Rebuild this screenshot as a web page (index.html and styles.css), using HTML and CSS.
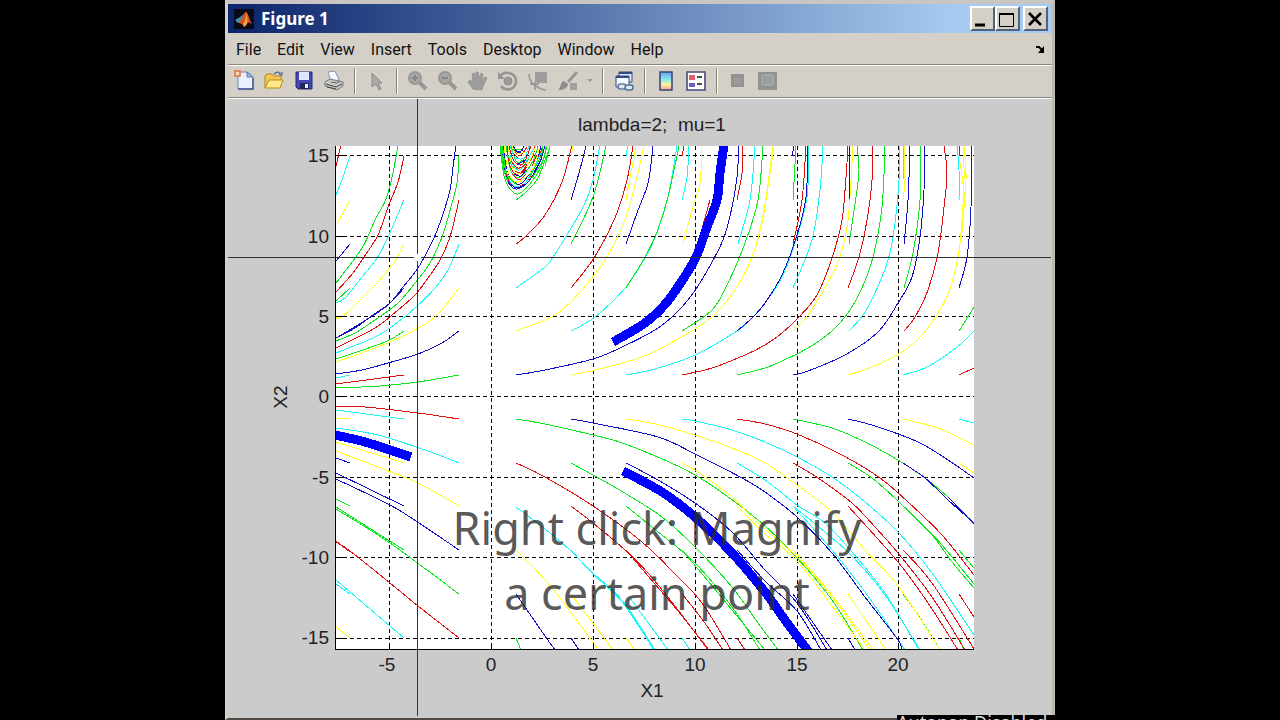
FILE: index.html
```html
<!DOCTYPE html>
<html lang="en">
<head>
    <meta charset="UTF-8">
    <meta name="viewport" content="width=device-width, initial-scale=1.0">
    <title>Figure 1</title>
    <link rel="stylesheet" href="styles.css">
</head>
<body>
    <main class="window">
        <header class="title-bar">
            <svg class="logo" viewBox="0 0 20 20" width="20" height="20">
                <rect width="20" height="20" fill="#080a18"/>
                <path d="M1 11 6 8l4-3-3 8-3 1z" fill="#3e8fb0"/>
                <path d="M4 14c4-1 5-11 8-11 2 0 3 7 6 12-3-2-4-2-5 0l-3 3c-1-3-3-4-6-4z" fill="#d8541c"/>
                <path d="M12 3c1 3-1 10-3 12l1 3 3-3c1-4 0-9-1-12z" fill="#f9a04a"/>
            </svg>
            <h1>Figure 1</h1>
            <div class="window-buttons">
                <button type="button" aria-label="Minimize"><svg viewBox="0 0 20 20" width="20" height="20"><path d="M3 16h10" stroke="#000" stroke-width="3"/></svg></button>
                <button type="button" aria-label="Maximize"><svg viewBox="0 0 20 20" width="20" height="20"><path d="M2.500 5v12.500h14V5" fill="none" stroke="#000"/><path d="M2 5h15" stroke="#000" stroke-width="2"/></svg></button>
                <button type="button" class="close" aria-label="Close"><svg viewBox="0 0 20 20" width="20" height="20"><path d="M4 4l12 12M16 4 4 16" stroke="#000" stroke-width="2.600"/></svg></button>
            </div>
        </header>

        <nav class="menu-bar">
            <button type="button">File</button>
            <button type="button">Edit</button>
            <button type="button">View</button>
            <button type="button">Insert</button>
            <button type="button">Tools</button>
            <button type="button">Desktop</button>
            <button type="button">Window</button>
            <button type="button">Help</button>
            <button type="button" class="dock" aria-label="Dock"><svg viewBox="0 0 10 10" width="10" height="10"><path d="M1 2h3l3 3" fill="none" stroke="#000" stroke-width="1.800"/><path d="M9 1v7H3z" fill="#000"/></svg></button>
        </nav>

        <div class="toolbar">
            <button type="button" aria-label="New"><svg viewBox="0 0 22 22"><path d="M5 2h9l6 5v12H5z" fill="#e9f1ff" stroke="#7385b5"/><path d="M14 2v5h6z" fill="#a9bde4" stroke="#5c70a5"/><path d="M5 19h15V8" fill="none" stroke="#41558f" stroke-width="1.400"/><path d="M2 1h5v5H2z" fill="#ffd9ae" stroke="#e36f40" stroke-width="1.500"/></svg></button>
            <button type="button" aria-label="Open"><svg viewBox="0 0 22 22"><path d="M2 18V6l2-2h5l2 2h7v4" fill="#f2c84d" stroke="#b18322"/><path d="M2 18l4-8h14l-3 8z" fill="#ffe989" stroke="#b88a1f"/><path d="M11 4c3-3 6-2 7 1M16 4l3 1V2" fill="none" stroke="#66748c" stroke-width="1.400"/></svg></button>
            <button type="button" aria-label="Save"><svg viewBox="0 0 22 22"><path d="M3 2h16v17H5l-2-2z" fill="#4348b8" stroke="#24286f"/><path d="M6 2h10v8H6z" fill="#dce7ff"/><path d="M7 13h9v6H7z" fill="#20265d"/><path d="M12 14h3v4h-3z" fill="#eef"/></svg></button>
            <button type="button" aria-label="Print"><svg viewBox="0 0 22 22"><path d="M5 2l7-1 4 9-8 2z" fill="#f3f9ff" stroke="#8795a8"/><path d="M2 12l5-3 13 3v4l-6 4-12-4z" fill="#c9c9c4" stroke="#777"/><path d="M3 14l10 3 6-3M4 17l9 2" fill="none" stroke="#444"/><path d="M8 12l6 1 3-2" fill="none" stroke="#666"/></svg></button>
            <span class="separator"></span>
            <button type="button" aria-label="Edit plot"><svg viewBox="0 0 22 22"><path d="M7 3v14l4-3 3 6 2-1-3-6h4z" fill="#aaa" stroke="#8a8a8a"/></svg></button>
            <span class="separator"></span>
            <button type="button" aria-label="Zoom in"><svg viewBox="0 0 22 22"><path d="M12 12l7 7" stroke="#979795" stroke-width="4"/><circle cx="8" cy="8" r="6" fill="#a7a7a5" stroke="#979795" stroke-width="2"/><path d="M5 8h6M8 5v6" stroke="#858585" stroke-width="2"/></svg></button>
            <button type="button" aria-label="Zoom out"><svg viewBox="0 0 22 22"><path d="M12 12l7 7" stroke="#979795" stroke-width="4"/><circle cx="8" cy="8" r="6" fill="#a7a7a5" stroke="#979795" stroke-width="2"/><path d="M5 8h6" stroke="#858585" stroke-width="2"/></svg></button>
            <button type="button" aria-label="Pan"><svg viewBox="0 0 22 22"><path d="M6 19l-5-7 2-2 3 2-1-8 2-1 2 6V2h2l1 7 2-6 2 1-1 7 3-4 2 1-4 8-1 4z" fill="#9d9d9b" stroke="#979795"/></svg></button>
            <button type="button" aria-label="Rotate 3D"><svg viewBox="0 0 22 22"><path d="M3 6c5-6 16-3 16 5 0 9-11 11-15 5" fill="none" stroke="#969694" stroke-width="2.600"/><path d="M1 2v7h7z" fill="#969694"/><circle cx="11" cy="11" r="4" fill="#9b9b99" stroke="#8b8b89"/></svg></button>
            <button type="button" aria-label="Data cursor"><svg viewBox="0 0 22 22"><path d="M8 2h12v11h-8l-3 3 1-4H8z" fill="#9d9d9b"/><path d="M2 4c0 7 4 11 7 12 3 2 7 4 10 4M8 12v8M3 14h9" fill="none" stroke="#969694" stroke-width="1.600"/></svg></button>
            <button type="button" aria-label="Brush"><svg viewBox="0 0 22 22"><path d="M20 2l-9 10" stroke="#969694" stroke-width="3"/><path d="M1 20c3-2 2-8 6-9l4 3c0 4-5 6-10 6z" fill="#8d8d8b"/><path d="M13 13h7v7h-7z" fill="#a0a09e"/></svg></button>
            <button type="button" class="caret" aria-label="Brush colors"><svg viewBox="0 0 8 8"><path d="M1 2h6L4 5z" fill="#999"/></svg></button>
            <span class="separator"></span>
            <button type="button" aria-label="Link plot"><svg viewBox="0 0 22 22"><path d="M6 2h13v10H6z" fill="#dceaff" stroke="#314b80"/><path d="M6 3h13" stroke="#314b80" stroke-width="2"/><path d="M3 6h13v11H3z" fill="#f6faff" stroke="#314b80"/><path d="M3 7h13" stroke="#314b80" stroke-width="2"/><rect x="5" y="14" width="8" height="5" rx="2.500" fill="#dde8f2" stroke="#637f9e" stroke-width="1.500"/><rect x="12" y="15" width="8" height="5" rx="2.500" fill="#dde8f2" stroke="#506f98" stroke-width="1.500"/></svg></button>
            <span class="separator"></span>
            <button type="button" aria-label="Colorbar"><svg viewBox="0 0 22 22"><defs><linearGradient id="bar" x2="0" y2="1"><stop stop-color="#719bf5"/><stop offset=".4" stop-color="#83e8ed"/><stop offset=".7" stop-color="#fff4a0"/><stop offset="1" stop-color="#f39b9c"/></linearGradient></defs><path d="M5 2h12v18H5z" fill="url(#bar)" stroke="#304678" stroke-width="1.500"/></svg></button>
            <button type="button" aria-label="Legend"><svg viewBox="0 0 22 22"><path d="M2 2h18v18H2z" fill="#fff" stroke="#454b78" stroke-width="1.600"/><path d="M4 5h6v5H4z" fill="#e15e6a"/><path d="M4 13h6v4H4z" fill="#655ed0"/><path d="M12 7h5M12 14h5" stroke="#111" stroke-width="1.500"/></svg></button>
            <span class="separator"></span>
            <button type="button" aria-label="Hide plot tools"><svg viewBox="0 0 22 22"><path d="M4 4h13v13H4z" fill="#929290"/><path d="M7 8h8v7H7z" fill="#9b9b99"/></svg></button>
            <button type="button" aria-label="Show plot tools"><svg viewBox="0 0 22 22"><path d="M1 2h19v18H1z" fill="#929290"/><path d="M5 5h11v10H5z" fill="#9c9c9a" stroke="#b2b2af"/></svg></button>
        </div>

        <section class="figure">
            <svg class="plot" viewBox="228 99 824 619" role="img" aria-label="Phase portrait">
                <defs><clipPath id="axes"><path d="M336 146h638v504H336z"/></clipPath></defs>
                <path d="M336 146h638v504H336z" fill="#fff"/>
                <g class="grid">
                    <path d="M389.500 146v504M491.500 146v504M593.500 146v504M695.500 146v504M797.500 146v504M898.500 146v504"/>
                    <path d="M336 155.500h638M336 236.500h638M336 316.500h638M336 396.500h638M336 477.500h638M336 557.500h638M336 638.500h638"/>
                </g>
                <g class="curves" clip-path="url(#axes)">
                    <!-- upper left -->
                    <path class="red" d="M341 145 336 166M404 156 398 182 388 207 378 235 364 257 353 273 336 292M459 200 450 237 440 260 428 278 415 295 398 310 375 328 336 348M404 375 336 384"/>
                    <path class="cyan" d="M350 156 343 177 336 195M404 200 388 237 377 258 358 282 345 298 336 303M459 244 448 270 435 288 415 308 398 322 375 337 336 353M350 375 336 378"/>
                    <path class="yellow" d="M350 200 337 224M404 244 395 261 377 283 355 305 342 317 336 318M459 288 435 317 405 335 375 348 336 362"/>
                    <path class="green" d="M398 145 393 173 386 199 375 220 362 248 336 283M350 288 336 301M459 156 457 183 451 207 442 237 430 263 415 283 398 303 375 320 355 333 336 341M404 331 385 342 336 359M459 375 418 382 380 386 336 388"/>
                    <path class="blue" d="M350 244 336 261M456 145 453 167 450 190 442 217 433 240 418 268 403 287 390 303 373 315 355 328 336 338M404 288 388 305 366 320 336 338M459 331 442 343 418 354 388 363 362 370 336 374"/>

                    <!-- lower left -->
                    <path class="red" d="M336 407 365 407 418 413 459 419M336 542 350 551 390 583 418 606 459 638M336 541 350 552"/>
                    <path class="cyan" d="M336 410 404 419M336 428 378 435 425 450 459 463M336 580 404 638M336 584 350 594"/>
                    <path class="yellow" d="M336 418 350 419M336 442 404 463M336 451 378 467 418 483 459 506M336 627 350 638"/>
                    <path class="blue" d="M336 458 350 463M336 473 404 506M336 479 390 505 422 525 459 550"/>
                    <path class="green" d="M336 499 350 506M336 507 404 550M336 509 390 543 459 594"/>

                    <!-- spiral near the top edge -->
                    <path class="green" d="M516 200 525 193 538 178 550 146M500 146 504 176 510 189 518 194 530 184 541 167 547 146M506 146 511 171 520 177 533 161 538 146M511 146 517 162 527 156 530 146"/>
                    <path class="blue" d="M501 146 505 173 510 185 517 189 528 182 539 164 545 146M503 146 507 169 513 181 522 183 536 163 541 146M513 146 519 153 524 146"/>
                    <path class="red" d="M502 146 507 176 516 187 530 177 543 146M507 146 510 166 518 174 532 158 535 146M509 146 514 161 523 164 531 146M514 150 520 156 527 147"/>
                    <path class="cyan" d="M502 146 506 171 514 186 526 182 542 151M508 146 513 165 521 169 534 148M510 146 515 157 524 158 529 146"/>
                    <path class="yellow" d="M504 146 509 174 518 182 532 170 540 146M508 146 513 169 524 171 536 146M512 146 516 154 525 152"/>
                    <path class="green" d="M503 150 507 174 517 185M529 178 541 156 543 146M508 155 513 167 522 167 529 159M513 149 521 149M501 146 504 170 508 182M502 146 505 168 509 179M532 178 543 160 546 147"/>
                    <path class="blue" d="M510 184 517 188 525 184M514 174 521 176 526 169M514 148 518 152 523 150M517 165 525 160M534 172 542 158"/>
                    <path class="red" d="M512 174 519 180 526 174M511 161 518 168 527 164M513 153 518 158M515 171 521 173 527 167M532 166 537 155"/>

                    <!-- upper right -->
                    <path class="red" d="M516 244 526 236 545 215 562 182 572 145M571 288 594 258 615 218 627 180 633 146M682 156 684 146M698 243 710 200M682 375 712 368 745 355 765 345 782 333 798 318 817 295 832 258 842 220 846 177 848 146M737 200 742 173 743 146M793 244 802 200 806 146M848 288 859 257 867 220 872 180 872 146M904 331 915 317 928 290 938 253 944 207 947 173 944 146M959 156 960 146M959 375 974 368"/>
                    <path class="cyan" d="M516 288 545 267 553 257 570 230 585 203 593 180 600 145M571 331 595 317 625 288 645 258 657 233 668 197 677 146M626 156 628 145M626 375 655 369 695 355 737 331 752 318 765 303 782 277 797 237 807 197 809 146M682 200 687 177 689 146M738 244 750 200 755 146M793 288 812 240 820 190 823 146M849 331 865 312 882 277 890 253 895 223 899 180 899 146M903 375 925 368 945 356 962 343 974 331M959 200 959 170 957 146M903 180 904 146"/>
                    <path class="yellow" d="M516 331 545 320 562 310 582 290 605 260 625 220 638 173 644 145M571 156 573 146M571 375 595 370 642 357 678 339 712 317 735 290 752 257 762 223 768 187 774 146M626 200 636 146M683 244 693 207 700 183 702 146M737 287 753 255 764 210 773 146M793 331 808 315 828 282 840 257 848 220 853 146M848 375 872 367 902 352 922 335 940 310 952 283 960 243 964 180 963 146M903 200 905 180 904 146M961 244 966 180 964 146M959 156 962 176 965 200"/>
                    <path class="green" d="M545 166 550 146M571 244 593 197 606 146M626 288 645 257 657 232 668 197 679 146M682 331 712 310 728 283 745 243 758 200 763 146M737 375 765 368 782 361 808 348 832 331 848 313 862 288 873 257 882 207 885 146M793 200 796 146M849 244 856 197 859 170 857 146M904 288 913 253 920 200 921 146M959 331 974 307"/>
                    <path class="blue" d="M516 375 545 370 593 359 622 347 655 330 672 317 688 300 703 278 723 240 732 207 737 177 739 146M571 200 579 173 586 146M626 244 637 213 648 183 653 146M737 331 752 318 765 303 782 275 797 235 806 197 808 146M792 156 794 146M793 375 808 371 845 355 878 332 898 303 912 277 920 237 924 190 925 146M849 200 850 146M904 244 908 200 910 146M959 288 967 257 971 207 971 146"/>

                    <!-- lower right -->
                    <path class="green" d="M516 419 545 424 593 435 628 445 695 475 758 520 797 558 832 600 863 650M516 638 521 650M571 463 593 475 623 492 662 517 695 547 732 587 758 623 778 650M626 506 652 527 695 563 732 607 760 650M682 550 718 593 765 650M793 419 832 428 865 442 898 460 925 478 948 497 974 523M848 463 872 478 898 501 932 535 952 562 974 588M903 506 932 534 952 557 974 584M903 594 920 618 940 650M959 550 974 568M959 638 964 650"/>
                    <path class="red" d="M516 463 545 477 593 506 642 542 678 577 702 603 731 650M571 506 593 523 625 550 648 573 678 610 708 650M626 550 648 576 678 611 709 650M682 594 702 619 723 650M737 419 765 424 797 434 842 455 880 478 908 502 942 535 974 575M793 463 818 478 852 503 875 527 898 553 932 597 965 650M737 638 745 650M848 506 898 562 928 603 958 650M903 550 932 583 974 649M959 594 974 617"/>
                    <path class="cyan" d="M516 507 545 529 570 550 593 573 622 600 655 650M571 550 593 574 622 602 654 650M630 598 668 650M682 638 690 650M682 419 695 421 732 430 765 442 797 457 832 477 865 502 898 532 932 573 974 635M737 463 765 480 797 505 825 523 852 552 885 593 919 650M793 506 825 532 852 556 885 595 920 650M793 506 832 550 865 592 905 650M959 419 974 423"/>
                    <path class="yellow" d="M516 550 552 588 597 648M571 594 613 650M626 638 635 650M626 419 655 424 695 435 732 448 765 463 797 485 832 512 865 550 899 587 940 650M682 463 695 470 732 497 758 523 797 557 832 597 870 650M737 506 765 534 797 561 832 606 865 650M793 550 832 595 873 650M848 594 886 650M903 419 938 428 974 445M959 463 974 473"/>
                    <path class="blue" d="M516 594 545 636 555 650M571 638 579 650M571 419 593 423 658 437 695 454 742 478 765 492 797 517 832 553 865 597 898 640 901 650M626 463 658 480 695 503 732 532 765 570 797 603 827 650M737 550 765 581 797 611 821 650M793 594 832 650M848 638 855 650M848 419 875 426 918 442 948 460 974 478M903 463 925 478 948 500 974 523M948 497 974 524"/>
                    <path class="blue thick" d="M330 434 365 442 411 457M613 342 645 323 667 302 687 273 697 255 707 227 717 200 720 173 724 145M623 471 662 492 695 517 732 553 765 592 785 620 811 655"/>
                </g>
                <path class="axis" d="M335.500 146v503.500H974M389.500 650v-7M491.500 650v-7M593.500 650v-7M695.500 650v-7M797.500 650v-7M898.500 650v-7M336 155.500h7M336 236.500h7M336 316.500h7M336 396.500h7M336 477.500h7M336 557.500h7M336 638.500h7"/>
                <g class="labels">
                    <text x="652" y="131" xml:space="preserve">lambda=2;  mu=1</text>
                    <text x="387" y="671">-5</text>
                    <text x="491" y="671">0</text>
                    <text x="593" y="671">5</text>
                    <text x="695" y="671">10</text>
                    <text x="797" y="671">15</text>
                    <text x="898" y="671">20</text>
                    <text x="652" y="697">X1</text>
                    <text transform="translate(287 397) rotate(-90)">X2</text>
                </g>
                <g class="labels y-labels">
                    <text x="329" y="162">15</text>
                    <text x="329" y="243">10</text>
                    <text x="329" y="323">5</text>
                    <text x="329" y="403">0</text>
                    <text x="329" y="484">-5</text>
                    <text x="329" y="564">-10</text>
                    <text x="329" y="644">-15</text>
                </g>
                <path class="crosshair" d="M228 257.500h186M421 257.500h630M417.500 99v155M417.500 261v455"/>
            </svg>
            <p class="caption">Right click: Magnify<br>a certain point</p>
        </section>
        <div class="status">Autopan Disabled</div>
    </main>

    <script>
        // Round off the corners of one trajectory
        function smoothLine(text) {
            var n = text.trim().split(/\s+/).map(Number);
            var pts = [];
            for (var i = 0; i < n.length; i += 2) {
                pts.push([n[i], n[i + 1]]);
            }
            var d = 'M' + pts[0].join(' ');
            for (var k = 0; k < pts.length - 1; k++) {
                var a = pts[k - 1] || pts[k];
                var b = pts[k];
                var c = pts[k + 1];
                var e = pts[k + 2] || c;
                d += 'C' + [
                    b[0] + (c[0] - a[0]) / 6, b[1] + (c[1] - a[1]) / 6,
                    c[0] - (e[0] - b[0]) / 6, c[1] - (e[1] - b[1]) / 6,
                    c[0], c[1]
                ].join(' ');
            }
            return d;
        }

        document.querySelectorAll('.curves path').forEach(function (path) {
            var lines = path.getAttribute('d').split('M').slice(1);
            path.setAttribute('d', lines.map(smoothLine).join(''));
        });
    </script>
</body>
</html>
```

FILE: styles.css
```css
* {
    box-sizing: border-box;
}
body {
    margin: 0;
    padding: 0 225px;
    background: #000;
    color: #111;
    font-family: "Noto Sans", sans-serif;
    overflow: hidden;
}
button {
    padding: 0;
    border: none;
    background: none;
    color: inherit;
    font: inherit;
}
svg {
    display: block;
}
.window {
    position: relative;
    border: 3px solid #d4d0c8;
    border-top: 4px solid #c9c5c2;
    border-right-color: #bdb9b1;
    border-bottom: 2px solid #514a45;
    background: #d4d0c8;
}
.title-bar {
    display: flex;
    align-items: center;
    height: 29px;
    padding: 0 4px 0 6px;
    background: linear-gradient(90deg, #0b246a, #a6caf0 88%);
    color: #fff;
}
.title-bar h1 {
    flex: 1;
    margin: 0 0 0 7px;
    font-size: 17px;
    line-height: 20px;
}
.window-buttons {
    display: flex;
}
.window-buttons button {
    width: 25px;
    height: 25px;
    padding: 1px 0;
    border: 2px solid;
    border-color: #fff #52607a #52607a #fff;
    background: #d4d0c8;
}
.window-buttons .close {
    margin-left: 3px;
}
.menu-bar {
    display: flex;
    align-items: center;
    height: 32px;
    padding-top: 2px;
    padding-right: 7px;
    border-bottom: 1px solid #88857f;
    font-family: Roboto, sans-serif;
    font-size: 16px;
    line-height: 20px;
}
.menu-bar button {
    padding: 0 8px;
}
.menu-bar .dock {
    margin-left: auto;
    padding: 0;
}
.toolbar {
    display: flex;
    align-items: center;
    height: 33px;
    padding-bottom: 2px;
    padding-left: 1px;
    border-top: 1px solid #fff;
    border-bottom: 1px solid #85837e;
}
.toolbar button {
    display: flex;
    flex: none;
    align-items: center;
    justify-content: center;
    width: 30px;
}
.toolbar svg {
    width: 22px;
    height: 22px;
}
.toolbar .caret {
    width: 14px;
}
.toolbar .caret svg {
    width: 8px;
    height: 8px;
}
.separator {
    flex: none;
    width: 2px;
    height: 26px;
    margin: 0 5px;
    border-left: 1px solid #85837e;
    border-right: 1px solid #fff;
}
.figure {
    position: relative;
    border-top: 1px solid #fff;
    background: #cbcbcb;
}
.plot {
    width: 100%;
    height: auto;
}
.grid {
    fill: none;
    stroke: #000;
    stroke-dasharray: 4 3;
    shape-rendering: crispEdges;
}
.curves {
    fill: none;
    stroke-width: 1;
    shape-rendering: crispEdges;
}
.red {
    stroke: #e01010;
}
.green {
    stroke: #10e520;
}
.blue {
    stroke: #1010c8;
}
.cyan {
    stroke: #20f5f5;
}
.yellow {
    stroke: #ffff20;
}
.thick {
    stroke: #00f;
    stroke-width: 9;
}
.axis {
    fill: none;
    stroke: #000;
    shape-rendering: crispEdges;
}
.crosshair {
    fill: none;
    stroke: #333;
    shape-rendering: crispEdges;
}
.labels {
    fill: #222;
    font-family: "Liberation Sans", sans-serif;
    font-size: 19px;
    text-anchor: middle;
}
.y-labels {
    text-anchor: end;
}
/* subtitle over the plot */
.caption {
    position: absolute;
    top: 64%;
    left: 0;
    width: 100%;
    margin: 0;
    padding-left: 34px;
    color: rgba(45, 45, 45, 0.8);
    font-size: 45px;
    line-height: 65px;
    text-align: center;
}
.status {
    position: absolute;
    right: -3px;
    bottom: -2px;
    width: 158px;
    height: 5px;
    overflow: hidden;
    background: #000;
    color: #ddd;
    font-size: 18px;
    line-height: 14px;
    white-space: nowrap;
}
```
